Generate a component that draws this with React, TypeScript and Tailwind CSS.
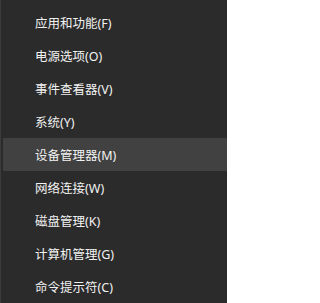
import React from "react";

const items = [
  "应用和功能(F)",
  "电源选项(O)",
  "事件查看器(V)",
  "系统(Y)",
  "设备管理器(M)",
  "网络连接(W)",
  "磁盘管理(K)",
  "计算机管理(G)",
  "命令提示符(C)",
];

export default function App() {
  return (
    <div className="w-[227px] h-[303px] bg-[#2b2b2b] border-l border-[#3c3c3c] overflow-hidden pt-[6px] pl-[2px]" style={{ fontFamily: '"Noto Sans", "Noto Sans CJK SC", sans-serif' }}>
      {items.map((t, i) => (
        <div
          key={i}
          className={`h-[33px] flex items-center pl-[32px] pt-[3px] text-[12.5px] leading-none text-[#f2f2f2] ${i === 4 ? "bg-[#414141]" : ""}`}
        >
          {t}
        </div>
      ))}
    </div>
  );
}
